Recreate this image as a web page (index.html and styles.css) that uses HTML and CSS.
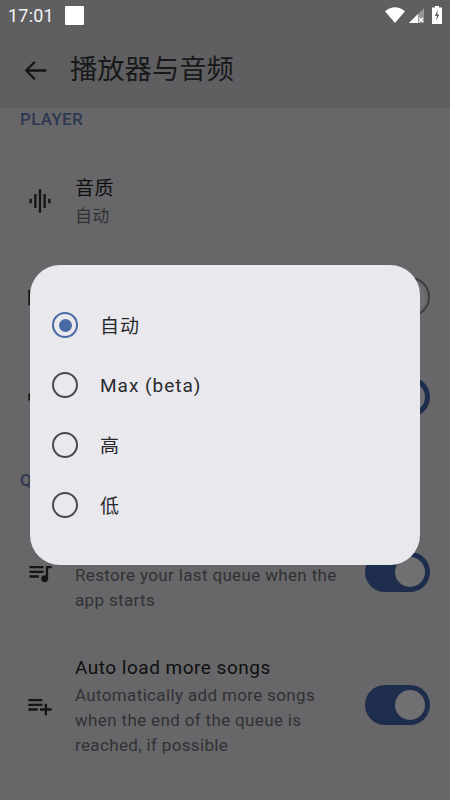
FILE: index.html
```html
<!DOCTYPE html>
<html lang="zh">
<head>
<meta charset="utf-8">
<title>播放器与音频</title>
<link rel="stylesheet" href="styles.css">
</head>
<body>
<div class="page">
  <header class="top">
    <div class="status">
      <span class="time">17:01</span>
      <span class="notif"></span>
      <span class="status-icons">
        <svg class="wifi" viewBox="0 0 20 16"><path d="M0 4.200Q10-3.600 20 4.200L10 16z"/></svg>
        <svg class="signal" viewBox="0 0 15 15"><path class="signal-bg" d="M15 0V15H0z"/><path d="M9 6V15H0z"/><path class="signal-x" d="M10 10l4 4m0-4l-4 4"/></svg>
        <svg class="battery" viewBox="0 0 10 18"><path d="M3 0h4v1.500h3V18H0V1.500h3z"/><path class="bolt" d="M6 3.500L3 10h2l-1 5 3.200-6.500H5.200z"/></svg>
      </span>
    </div>
    <div class="appbar">
      <svg class="back" viewBox="0 0 24 24"><path d="M21 12H4.500M11.500 4.800 4.300 12l7.200 7.200"/></svg>
      <h1 class="title">播放器与音频</h1>
    </div>
  </header>

  <main class="list">
    <h2 class="section section-player">PLAYER</h2>
    <div class="row row-first">
      <svg class="icon" viewBox="0 0 24 24"><path d="M7 18h2V6H7v12zm4 4h2V2h-2v20zm-8-8h2v-4H3v4zm12 4h2V6h-2v12zm4-8v4h2v-4h-2z"/></svg>
      <div class="text">
        <div class="row-title">音质</div>
        <div class="row-sub">自动</div>
      </div>
    </div>
    <div class="row row-second">
      <svg class="icon" viewBox="0 0 24 24"><path d="M2 6h1.700v13H2zM5 18l8.500-6L5 6v12zm9-12v12l8.500-6L14 6z"/></svg>
      <div class="text"></div>
      <span class="switch switch-off"><span class="thumb"></span></span>
    </div>
    <div class="row row-third">
      <svg class="icon" viewBox="0 0 24 24"><path d="M2 9v6h4l5 5V4L6 9H2z"/></svg>
      <div class="text"></div>
      <span class="switch"><span class="thumb"></span></span>
    </div>

    <h2 class="section section-queue">QUEUE</h2>
    <div class="row">
      <svg class="icon" viewBox="0 0 24 24"><path d="M15 6H3v2h12V6zm0 4H3v2h12v-2zM3 16h8v-2H3v2zM17 6v8.180c-.31-.11-.65-.18-1-.18-1.660 0-3 1.340-3 3s1.340 3 3 3 3-1.340 3-3V8h3V6h-5z"/></svg>
      <div class="text">
        <div class="row-title"></div>
        <div class="row-sub">Restore your last queue when the app starts</div>
      </div>
      <span class="switch switch-up"><span class="thumb"></span></span>
    </div>
    <div class="row">
      <svg class="icon" viewBox="0 0 24 24"><path d="M14 10H2v2h12v-2zm0-4H2v2h12V6zm4 8v-4h-2v4h-4v2h4v4h2v-4h4v-2h-4zM2 16h8v-2H2v2z"/></svg>
      <div class="text">
        <div class="row-title">Auto load more songs</div>
        <div class="row-sub">Automatically add more songs when the end of the queue is reached, if possible</div>
      </div>
      <span class="switch switch-up"><span class="thumb"></span></span>
    </div>
  </main>

  <div class="overlay">
    <div class="dialog">
      <div class="option"><span class="radio radio-on"></span><span class="label label-cjk">自动</span></div>
      <div class="option"><span class="radio"></span><span class="label">Max (beta)</span></div>
      <div class="option"><span class="radio"></span><span class="label label-cjk">高</span></div>
      <div class="option"><span class="radio"></span><span class="label label-cjk">低</span></div>
    </div>
  </div>
</div>
</body>
</html>
```
FILE: styles.css
```css
* { box-sizing: border-box; }
html, body { margin: 0; padding: 0; }
body {
  font-family: Roboto, "Noto Sans CJK SC", sans-serif;
  background: #676769;
}
.page {
  position: relative;
  width: 450px;
  height: 800px;
  overflow: hidden;
  background: #676769;
}
.top { background: #5f5f61; height: 108px; }
.status {
  height: 34px;
  display: flex;
  align-items: center;
  padding: 0 8px 4px;
  color: #f2f2f2;
}
.time { font-size: 18px; letter-spacing: .2px; width: 57px; }
.notif { width: 19px; height: 19px; background: #fff; border-radius: 1px; }
.status-icons { margin-left: auto; display: flex; align-items: center; gap: 4px; fill: #fff; }
.wifi { width: 20px; height: 16px; }
.signal { width: 15px; height: 15px; }
.signal-bg { opacity: .35; }
.signal-x { stroke: #fff; stroke-width: 1.300; fill: none; }
.battery { width: 10px; height: 18px; margin-left: 4px; }
.bolt { fill: #55555a; }
.appbar {
  height: 74px;
  display: flex;
  align-items: center;
  padding: 0 0 2px 21px;
}
.back { width: 29px; height: 29px; fill: none; stroke: #141416; stroke-width: 1.900; flex: none; }
.title {
  margin: 0 0 0 20px;
  font-size: 27.300px;
  font-weight: 400;
  color: #18181a;
  line-height: 36px;
}
.section {
  margin: 0;
  padding-left: 20px;
  font-size: 17px;
  font-weight: 500;
  line-height: 20px;
  color: #2d3652;
  letter-spacing: .3px;
}
.section-player { margin-bottom: 26px; padding-top: 1px; height: 20px; }
.section-queue { margin-top: 22px; margin-bottom: 24px; }
.row {
  display: flex;
  align-items: center;
  padding: 20px 20px 20px 26px;
  margin-bottom: 2px;
}
.row-first { min-height: 94px; margin-bottom: 0; }
.row-second { min-height: 98px; margin-bottom: 0; }
.row-third { min-height: 102px; margin-bottom: 0; }
.icon { width: 28px; height: 28px; fill: #151517; flex: none; }
.text { flex: 1; min-width: 0; padding: 0 26px 0 21px; }
.row-title {
  min-height: 28px;
  font-size: 19px;
  line-height: 28px;
  color: #0f0f11;
  letter-spacing: .5px;
}
.row-sub {
  margin: 1px 0 -1px;
  font-size: 17px;
  line-height: 25px;
  color: #313135;
  letter-spacing: .35px;
}
.switch {
  display: flex;
  align-items: center;
  justify-content: flex-end;
  width: 65px;
  height: 40px;
  flex: none;
  padding-right: 5px;
  border-radius: 20px;
  background: #1f2d4d;
}
.switch-up { margin-bottom: 2px; }
.thumb { width: 30px; height: 30px; border-radius: 50%; background: #707072; }
.switch-off {
  background: #69696b;
  border: 2.500px solid #3e3e42;
  padding-right: 3px;
}
.overlay {
  position: absolute;
  inset: 0;
  display: flex;
  align-items: center;
  justify-content: center;
  padding-top: 30px;
}
.dialog {
  width: 390px;
  height: 300px;
  padding: 30px 22px;
  background: #e8e8ed;
  border-radius: 30px;
}
.option { height: 60px; display: flex; align-items: center; }
.radio {
  width: 26px;
  height: 26px;
  border: 2.500px solid #49494d;
  border-radius: 50%;
  flex: none;
  display: flex;
  align-items: center;
  justify-content: center;
}
.radio-on { border-color: #4a6aa5; }
.radio-on::after {
  content: "";
  width: 13px;
  height: 13px;
  border-radius: 50%;
  background: #4a6aa5;
}
.label {
  margin-left: 22px;
  font-size: 19px;
  letter-spacing: 1px;
  color: #2a2a2d;
}
.label-cjk { padding-bottom: 2px; }
```
